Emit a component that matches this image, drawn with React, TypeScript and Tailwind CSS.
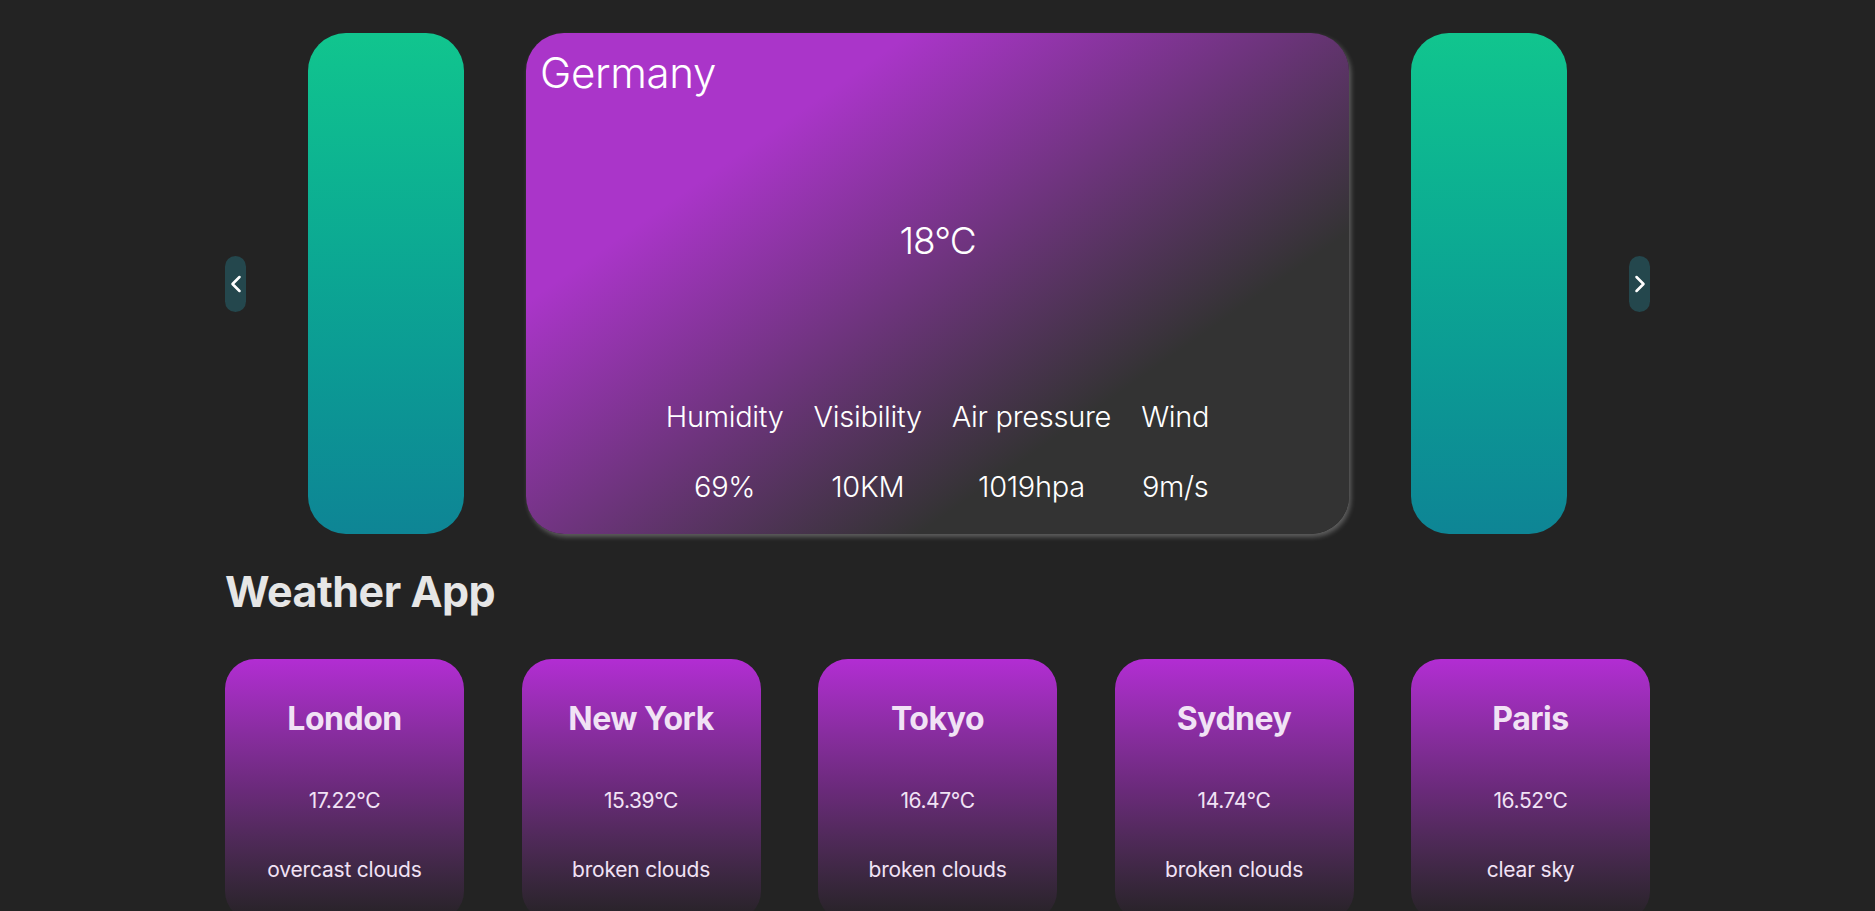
import React from 'react';
import { ChevronLeft, ChevronRight } from 'lucide-react';

const cities = [
  { name: 'London', temp: '17.22°C', desc: 'overcast clouds' },
  { name: 'New York', temp: '15.39°C', desc: 'broken clouds' },
  { name: 'Tokyo', temp: '16.47°C', desc: 'broken clouds' },
  { name: 'Sydney', temp: '14.74°C', desc: 'broken clouds' },
  { name: 'Paris', temp: '16.52°C', desc: 'clear sky' },
];

const stats = [
  { label: 'Humidity', value: '69%' },
  { label: 'Visibility', value: '10KM' },
  { label: 'Air pressure', value: '1019hpa' },
  { label: 'Wind', value: '9m/s' },
];

const App: React.FC = () => {
  return (
    <div className="min-h-screen bg-[#232323] font-['Inter','Noto_Sans',sans-serif] text-white">
      <div className="w-[1425px] mx-auto pt-[33px]">
        {/* Carousel */}
        <div className="flex items-center justify-between">
          <button className="w-[21px] h-[56px] rounded-full bg-[#24474d] flex items-center justify-center text-white">
            <ChevronLeft className="w-7 h-7 shrink-0" strokeWidth={2.2} />
          </button>
          <div className="w-[156px] h-[501px] rounded-[38px] bg-gradient-to-b from-[#11c58e] to-[#0e8595]" />
          <div className="w-[823px] h-[501px] rounded-[38px] bg-[linear-gradient(145deg,#aa35c9_0%,#aa35c9_25%,#333333_72%,#333333_100%)] shadow-[2px_3px_5px_rgba(255,255,255,0.28)] flex flex-col">
            <h2 className="pl-[14px] pt-[14px] text-[42px] font-light leading-tight tracking-[-0.3px]">Germany</h2>
            <div className="flex-1 flex items-start justify-center pt-[113px]">
              <span className="text-[37px] font-light tracking-[-1px]">18°C</span>
            </div>
            <div className="flex justify-center gap-[30px] pb-[33px]">
              {stats.map((s) => (
                <div key={s.label} className="flex flex-col items-center gap-[41px]">
                  <span className="text-[29px] font-light leading-none tracking-[-0.3px]">{s.label}</span>
                  <span className="text-[29px] font-light leading-none tracking-[-0.3px]">{s.value}</span>
                </div>
              ))}
            </div>
          </div>
          <div className="w-[156px] h-[501px] rounded-[38px] bg-gradient-to-b from-[#11c58e] to-[#0e8595]" />
          <button className="w-[21px] h-[56px] rounded-full bg-[#24474d] flex items-center justify-center text-white">
            <ChevronRight className="w-7 h-7 shrink-0" strokeWidth={2.2} />
          </button>
        </div>

        {/* Heading */}
        <h1 className="mt-[25px] text-[43px] font-bold text-[#e6e6e6] tracking-[-0.5px]">Weather App</h1>

        {/* City cards */}
        <div className="mt-[35px] flex justify-between">
          {cities.map((c) => (
            <div
              key={c.name}
              className="w-[239px] h-[262px] rounded-[30px] bg-gradient-to-b from-[#b22dd3] via-[#6a2a7a] to-[#252225] flex flex-col items-center pt-[44px] text-[#f1e2f5]"
            >
              <h3 className="text-[32px] font-bold leading-none tracking-[-0.5px]">{c.name}</h3>
              <p className="mt-[55px] text-[21px] leading-none tracking-[-0.4px]">{c.temp}</p>
              <p className="mt-[48px] text-[21px] leading-none tracking-[-0.2px]">{c.desc}</p>
            </div>
          ))}
        </div>
      </div>
    </div>
  );
};

export default App;
